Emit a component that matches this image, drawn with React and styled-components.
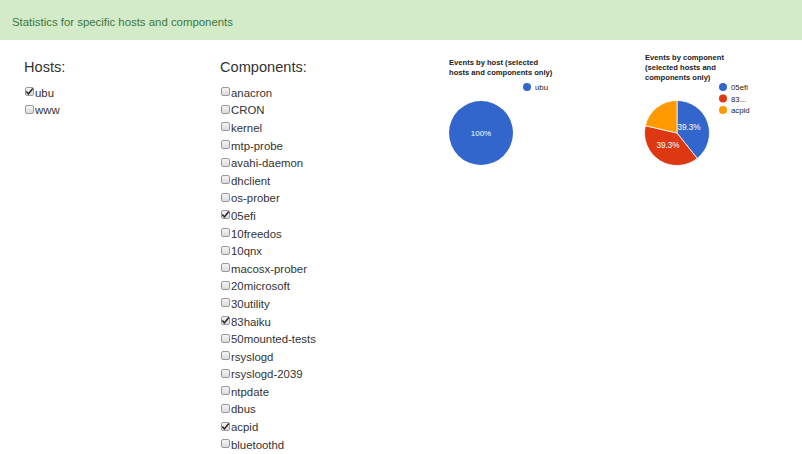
import styled, { createGlobalStyle } from "styled-components";

const GlobalStyle = createGlobalStyle`
    html, body {
        margin: 0;
        padding: 0;
        background: #ffffff;
    }
    body {
        font-family: "Liberation Sans", Arial, sans-serif;
        color: #333333;
    }
`;

const hosts = [
    { name: "ubu", checked: true },
    { name: "www", checked: false },
];

const components = [
    "anacron", "CRON", "kernel", "mtp-probe", "avahi-daemon", "dhclient",
    "os-prober", "05efi", "10freedos", "10qnx", "macosx-prober", "20microsoft",
    "30utility", "83haiku", "50mounted-tests", "rsyslogd", "rsyslogd-2039",
    "ntpdate", "dbus", "acpid", "bluetoothd",
];
const checkedComponents = ["05efi", "83haiku", "acpid"];

function Check({ checked }) {
    return (
        <Box $checked={checked}>
            {checked && (
                <svg width="9" height="9" viewBox="0 0 9 9">
                    <path d="M1.3 4.6 L3.4 6.9 L7.8 1.6" fill="none" stroke="#222" strokeWidth="1.5" />
                </svg>
            )}
        </Box>
    );
}

function Option({ name, checked }) {
    return (
        <Row>
            <Check checked={checked} />
            <span>{name}</span>
        </Row>
    );
}

function slice(cx, cy, r, from, to) {
    const a0 = (from * Math.PI) / 180;
    const a1 = (to * Math.PI) / 180;
    const x0 = cx + r * Math.sin(a0);
    const y0 = cy - r * Math.cos(a0);
    const x1 = cx + r * Math.sin(a1);
    const y1 = cy - r * Math.cos(a1);
    const large = to - from > 180 ? 1 : 0;
    return `M${cx} ${cy} L${x0} ${y0} A${r} ${r} 0 ${large} 1 ${x1} ${y1} Z`;
}

const font = "Liberation Sans, Arial, sans-serif";

function HostChart() {
    return (
        <svg width="196" height="130" viewBox="0 0 196 130">
            <g fontFamily={font} fontSize="7.6" fontWeight="bold" fill="#222">
                <text x="9" y="15">Events by host (selected</text>
                <text x="9" y="25">hosts and components only)</text>
            </g>
            <circle cx="87" cy="37" r="4" fill="#3366cc" />
            <text x="95" y="40" fontFamily={font} fontSize="7.8" fill="#222">ubu</text>
            <circle cx="41" cy="83" r="32" fill="#3366cc" />
            <text x="41" y="86" textAnchor="middle" fontFamily={font} fontSize="8" fill="#fff">100%</text>
        </svg>
    );
}

function ComponentChart() {
    const cx = 41;
    const cy = 83;
    const r = 32.5;
    return (
        <svg width="166" height="130" viewBox="0 0 166 130">
            <g fontFamily={font} fontSize="7.6" fontWeight="bold" fill="#222">
                <text x="9" y="10">Events by component</text>
                <text x="9" y="20">(selected hosts and</text>
                <text x="9" y="30">components only)</text>
            </g>
            <g fontFamily={font} fontSize="7.8" fill="#222">
                <circle cx="87" cy="37" r="4" fill="#3366cc" />
                <text x="95" y="40">05efi</text>
                <circle cx="87" cy="48.5" r="4" fill="#dc3912" />
                <text x="95" y="51.5">83...</text>
                <circle cx="87" cy="60" r="4" fill="#ff9900" />
                <text x="95" y="63">acpid</text>
            </g>
            <path d={slice(cx, cy, r, 0, 141.5)} fill="#3366cc" stroke="#fff" strokeWidth="0.8" />
            <path d={slice(cx, cy, r, 141.5, 283)} fill="#dc3912" stroke="#fff" strokeWidth="0.8" />
            <path d={slice(cx, cy, r, 283, 360)} fill="#ff9900" stroke="#fff" strokeWidth="0.8" />
            <g fontFamily={font} fontSize="8.2" fill="#fff" textAnchor="middle">
                <text x="53" y="80">39.3%</text>
                <text x="32" y="98">39.3%</text>
            </g>
        </svg>
    );
}

export default function App() {
    return (
        <>
            <GlobalStyle />
            <Heading>Statistics for specific hosts and components</Heading>
            <Body>
                <HostColumn>
                    <Title>Hosts:</Title>
                    {hosts.map((h) => (
                        <Option key={h.name} name={h.name} checked={h.checked} />
                    ))}
                </HostColumn>
                <ComponentColumn>
                    <Title>Components:</Title>
                    {components.map((c) => (
                        <Option key={c} name={c} checked={checkedComponents.includes(c)} />
                    ))}
                </ComponentColumn>
                <Charts>
                    <HostChart />
                    <ComponentChart />
                </Charts>
            </Body>
        </>
    );
}

const Heading = styled.div`
    height: 40px;
    box-sizing: border-box;
    padding: 4px 12px 0;
    display: flex;
    align-items: center;
    background: #d3ebc9;
    color: #3c763d;
    font-size: 11.4px;
`;

const Body = styled.div`
    display: flex;
    padding-left: 24px;
`;

const HostColumn = styled.div`
    width: 196px;
    padding-top: 18px;
`;

const ComponentColumn = styled.div`
    width: 220px;
    padding-top: 18px;
`;

const Title = styled.div`
    font-size: 14.6px;
    line-height: 18px;
    color: #333;
    margin-bottom: 8px;
`;

const Row = styled.div`
    height: 17.6px;
    display: flex;
    align-items: center;
    font-size: 11.4px;
    color: #333;
`;

const Box = styled.span`
    width: 9px;
    height: 9px;
    margin-right: 1px;
    margin-left: 1px;
    box-sizing: border-box;
    border: 1px solid #9a9a9a;
    border-radius: 2px;
    background: linear-gradient(#f4f4f4, #dcdcdc);
    display: inline-flex;
    align-items: center;
    justify-content: center;
    position: relative;
    top: -1px;
    svg {
        position: absolute;
        left: -1px;
        top: -1px;
    }
`;

const Charts = styled.div`
    display: flex;
    margin-top: 10px;
    align-items: flex-start;
`;
